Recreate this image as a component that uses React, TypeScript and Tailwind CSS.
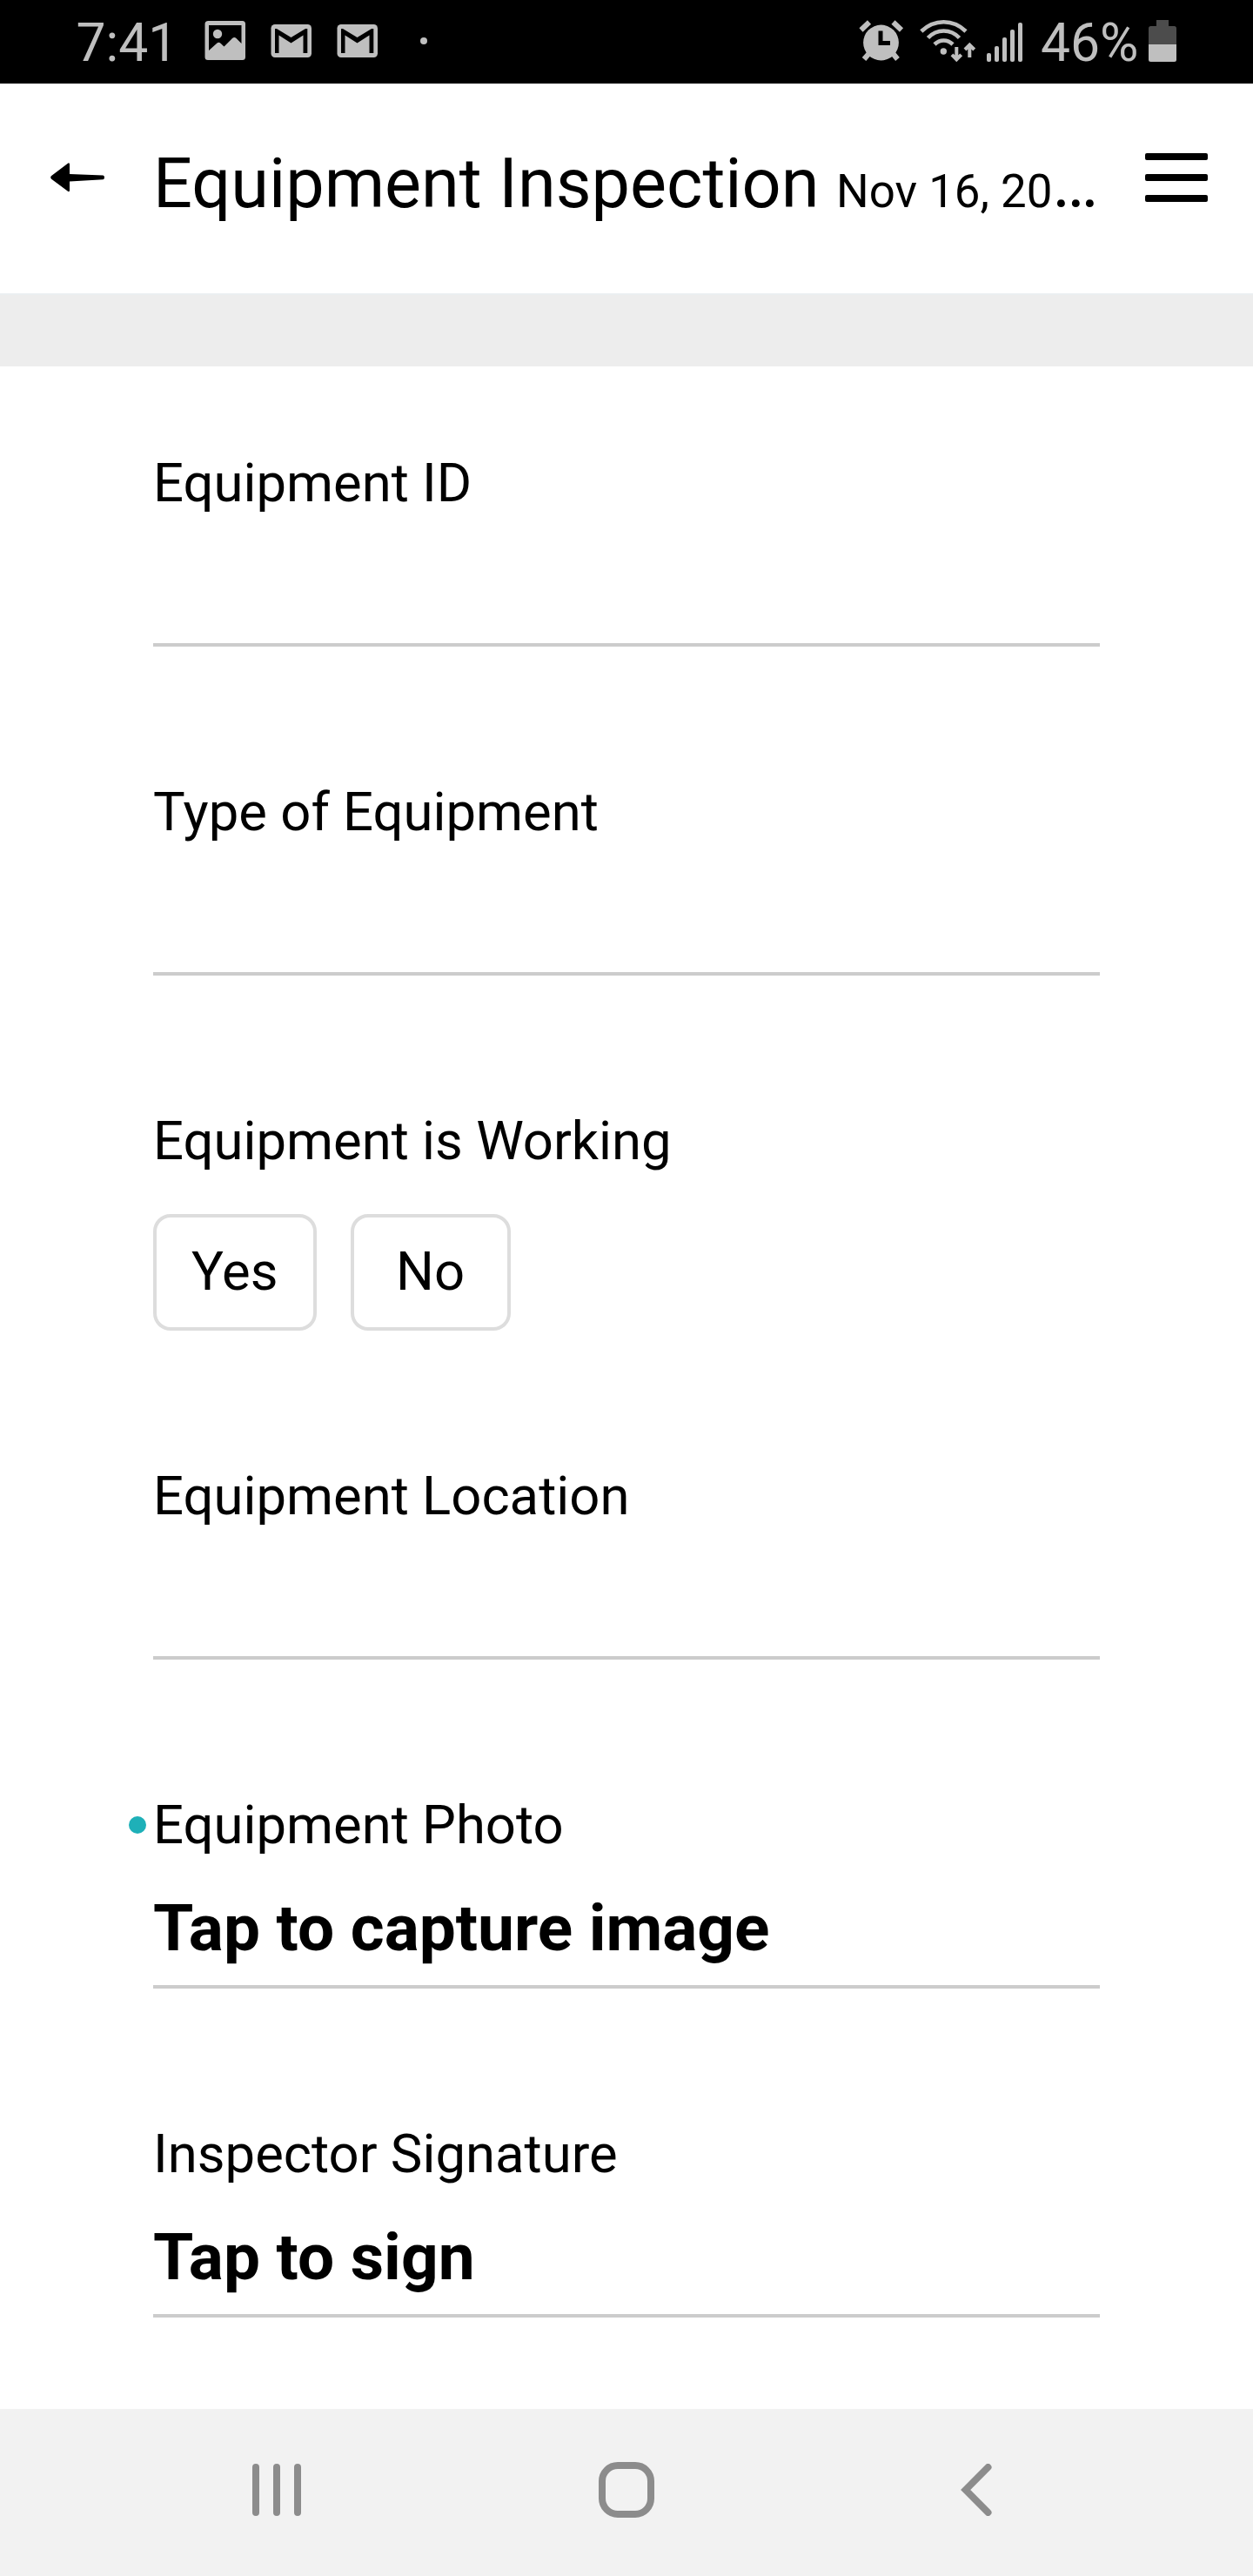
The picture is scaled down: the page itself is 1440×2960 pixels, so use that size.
import type { ReactNode } from "react";

function ImageIcon() {
  return (
    <svg width="48" height="46" viewBox="0 0 48 46" fill="#bfbfbf">
      <path
        fillRule="evenodd"
        d="M4.500 0H43.500Q47 0 47 3.500V41.500Q47 45 43.500 45H4Q.5 45 .5 41.500V3.500Q.5 0 4.500 0ZM5 5V34L14.500 25.500Q16.500 23.800 18.500 25.800L22.500 29.500L32 20Q34.300 18 36.500 20L42.500 26V5Z"
      />
      <circle cx="15" cy="15" r="5.200" />
    </svg>
  );
}

function MailIcon() {
  return (
    <svg width="48" height="38" viewBox="0 0 48 38">
      <rect x=".5" y="0" width="46.500" height="38" rx="4.500" fill="#bfbfbf" />
      <path d="M5 5H7L23.500 15L40 5H42.300V33H37.500V12.500L23.500 21.500L9.500 12.500V33H5Z" fill="#000" />
    </svg>
  );
}

function AlarmIcon() {
  return (
    <svg width="52" height="48" viewBox="0 0 52 48">
      <g stroke="#bfbfbf" strokeWidth="6" fill="none">
        <path d="M2.500 11.500L12 2.500M39.500 2.500L49 11.500M13 37L6 45M38 37L44.500 45" />
      </g>
      <circle cx="25.500" cy="26" r="20.400" fill="#bfbfbf" />
      <path d="M25 12.500V26.500H36" stroke="#000" strokeWidth="5" fill="none" />
    </svg>
  );
}

function WifiIcon() {
  return (
    <svg width="66" height="50" viewBox="0 0 66 50">
      <g stroke="#bfbfbf" strokeWidth="4.600" fill="none">
        <path d="M1.800 13Q13 2.300 27.500 2.300T53 13" />
        <path d="M9.500 20.500Q17 12.500 27.500 12.500T45.500 20.500" />
        <path d="M17 28Q21.500 23.500 27.500 23.500T38 28" />
      </g>
      <circle cx="27.300" cy="36" r="3.700" fill="#bfbfbf" />
      <g stroke="#bfbfbf" strokeWidth="4" fill="none">
        <path d="M42.300 31V45M37 39.800L42.300 45.300L47.700 39.800" />
        <path d="M57.300 43V29M52 34L57.300 28.500L62.700 34" />
      </g>
    </svg>
  );
}

function SignalIcon() {
  return (
    <svg width="41" height="46" viewBox="0 0 41 46" fill="#bfbfbf">
      <rect x="0" y="35" width="5" height="10" rx="2" />
      <rect x="9" y="27" width="5" height="18" rx="2" />
      <rect x="18" y="17" width="5" height="28" rx="2" />
      <rect x="27" y="8" width="5" height="37" rx="2" />
      <rect x="36" y="0" width="5" height="45" rx="2" />
    </svg>
  );
}

function BatteryIcon() {
  return (
    <svg width="32" height="48" viewBox="0 0 32 48">
      <path d="M9 0H23V7H29.500Q32 7 32 9.500V28H0V9.500Q0 7 2.500 7H9Z" fill="#4c4c4c" />
      <path d="M0 28H32V45.500Q32 48 29.500 48H2.500Q0 48 0 45.500Z" fill="#bfbfbf" />
    </svg>
  );
}

function StatusBar() {
  return (
    <div className="flex h-24 shrink-0 items-start bg-black pl-[87.500px] text-[60.6px] leading-[70px] text-[#bfbfbf]">
      <span className="mt-[15px] w-[147.500px]">7:41</span>
      <div className="mt-6"><ImageIcon /></div>
      <div className="mt-7 ml-7"><MailIcon /></div>
      <div className="mt-7 ml-7"><MailIcon /></div>
      <div className="mt-[43px] ml-12 size-2 rounded-full bg-[#bfbfbf]" />
      <div className="mr-[88px] ml-auto flex items-start">
        <div className="mt-[23px]"><AlarmIcon /></div>
        <div className="mt-[23px] ml-[18px]"><WifiIcon /></div>
        <div className="mt-[26px] ml-[11px]"><SignalIcon /></div>
        <span className="mt-[15px] ml-[21px] w-[124px]">46%</span>
        <div className="mt-[23px]"><BatteryIcon /></div>
      </div>
    </div>
  );
}

function Header() {
  return (
    <header className="flex h-[241px] shrink-0 items-start bg-white pl-[58px]">
      <button aria-label="Back" className="mt-[91px]">
        <svg width="62" height="34" viewBox="0 0 62 34" className="block overflow-visible">
          <path
            d="M.8 15.200L19.300 1.200Q22 -.8 22 2V13L60.500 14.500Q62 14.900 62 17T60.500 19.200L22 21.500V31.500Q22 34.300 19.300 32.300L.8 18.500Q-.6 16.800 .8 15.200Z"
            fill="#000"
          />
        </svg>
      </button>
      <h1 className="mt-[67px] ml-14 w-[1088px] text-[79.2px] leading-[96px] whitespace-nowrap">
        Equipment Inspection <span className="text-[52.8px]">Nov 16, 20</span>…
      </h1>
      <button aria-label="Menu" className="mt-20 ml-[52px] flex w-[72px] flex-col gap-4">
        <span className="h-2 rounded-[2px] bg-black" />
        <span className="h-2 rounded-[2px] bg-black" />
        <span className="h-2 rounded-[2px] bg-black" />
      </button>
    </header>
  );
}

function Label({ children, marked }: { children: ReactNode; marked?: boolean }) {
  return (
    <div className="relative text-[61.6px] leading-[72px]">
      {marked && <span className="absolute top-[26px] left-[-28px] size-5 rounded-full bg-[#1eb0b8]" />}
      {children}
    </div>
  );
}

function Field({ label, action, marked }: { label: string; action?: string; marked?: boolean }) {
  return (
    <div>
      <Label marked={marked}>{label}</Label>
      <div className="h-[152px] border-b-4 border-[#cccccc] pt-[39px] text-[74.8px] leading-[88px] font-bold">
        {action}
      </div>
    </div>
  );
}

function Choice({ children }: { children: string }) {
  return (
    <button className="flex h-[134px] min-w-[184px] items-center justify-center rounded-[20px] border-4 border-[#dddddd] px-[40px] pb-[2px] text-[61.6px] leading-[72px]">
      {children}
    </button>
  );
}

export default function App() {
  return (
    <div className="flex h-[2960px] w-[1440px] flex-col overflow-hidden bg-white font-[Roboto,sans-serif] text-black">
      <StatusBar />
      <Header />
      <div className="h-[84px] shrink-0 border-t-2 border-[#ebeff1] bg-[#ededed]" />
      <main className="flex flex-1 flex-col gap-[154px] px-44 pt-[98px]">
        <Field label="Equipment ID" />
        <Field label="Type of Equipment" />
        <div>
          <Label>Equipment is Working</Label>
          <div className="mt-12 flex gap-[39px]">
            <Choice>Yes</Choice>
            <Choice>No</Choice>
          </div>
        </div>
        <Field label="Equipment Location" />
        <Field label="Equipment Photo" action="Tap to capture image" marked />
        <Field label="Inspector Signature" action="Tap to sign" />
      </main>
      <nav className="flex h-48 shrink-0 items-start bg-[#f2f2f2] pt-[61px] pl-[290px]">
        <div className="mt-[2px] flex gap-4">
          <span className="h-[60px] w-2 rounded-full bg-[#8c8c8c]" />
          <span className="h-[60px] w-2 rounded-full bg-[#8c8c8c]" />
          <span className="h-[60px] w-2 rounded-full bg-[#8c8c8c]" />
        </div>
        <div className="ml-[342px] size-16 rounded-[22px] border-8 border-[#8c8c8c]" />
        <svg width="36" height="60" viewBox="0 0 36 60" className="mt-[2px] ml-[352px]" fill="none" stroke="#8c8c8c" strokeWidth="8" strokeLinecap="round">
          <path d="M31.500 4L5.700 30L31.500 56" />
        </svg>
      </nav>
    </div>
  );
}
